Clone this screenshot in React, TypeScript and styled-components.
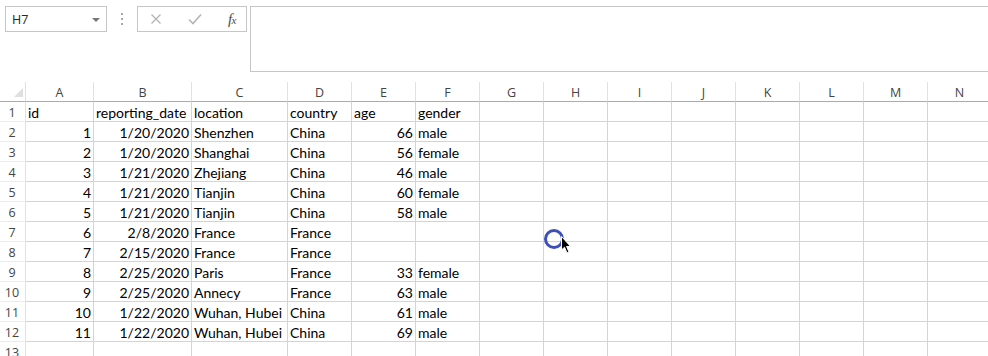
import styled, { createGlobalStyle } from 'styled-components';

const GlobalStyle = createGlobalStyle`
  html, body {
    margin: 0;
    padding: 0;
    background: #ffffff;
    overflow: hidden;
  }
  body {
    font-family: Lato, "Liberation Sans", sans-serif;
  }
`;

const Page = styled.div`
  position: relative;
  width: 988px;
  height: 356px;
  overflow: hidden;
  background: #ffffff;
`;

/* formula bar */

const FormulaBar = styled.div`
  display: flex;
  align-items: flex-start;
  height: 82px;
  padding: 6px 0 0 5px;
  box-sizing: border-box;
`;

const NameBox = styled.div`
  display: flex;
  align-items: center;
  justify-content: space-between;
  width: 102px;
  height: 26px;
  box-sizing: border-box;
  border: 1px solid #c6c6c6;
  padding: 0 6px 0 6px;
  font-family: "Open Sans", "Liberation Sans", sans-serif;
  font-size: 12.5px;
  color: #262626;
`;

const Caret = styled.span`
  width: 0;
  height: 0;
  border-left: 4px solid transparent;
  border-right: 4px solid transparent;
  border-top: 4px solid #777777;
  margin-top: 1px;
`;

const Grip = styled.div`
  display: flex;
  flex-direction: column;
  gap: 3px;
  width: 30px;
  height: 26px;
  align-items: center;
  justify-content: center;
  span {
    width: 2px;
    height: 2px;
    background: #a8a8a8;
  }
`;

const FnBox = styled.div`
  display: flex;
  align-items: center;
  justify-content: space-between;
  width: 110px;
  height: 26px;
  box-sizing: border-box;
  border: 1px solid #c6c6c6;
  padding: 0 10px 0 12px;
`;

const FxLabel = styled.span`
  font-family: "Liberation Serif", serif;
  font-style: italic;
  font-size: 15px;
  color: #4a4a4a;
  letter-spacing: -0.5px;
  sub {
    font-size: 11px;
    vertical-align: baseline;
  }
`;

const FormulaInput = styled.div`
  flex: 1;
  height: 66px;
  margin-left: 3px;
  box-sizing: border-box;
  border: 1px solid #c6c6c6;
  border-right: none;
`;

/* sheet */

const Sheet = styled.div`
  display: grid;
  grid-template-columns: 26px 68px 98px 96px repeat(11, 64px);
  grid-auto-rows: 20px;
  font-size: 14px;
  color: #000000;
`;

const Corner = styled.div`
  position: relative;
  border-right: 1px solid #e1e1e1;
  border-bottom: 1px solid #ababab;
  &::after {
    content: '';
    position: absolute;
    right: 2px;
    bottom: 4px;
    width: 0;
    height: 0;
    border-left: 9px solid transparent;
    border-bottom: 9px solid #dfdfdf;
  }
`;

const ColHead = styled.div`
  display: flex;
  align-items: center;
  justify-content: center;
  border-right: 1px solid #e1e1e1;
  border-bottom: 1px solid #ababab;
  font-family: "Open Sans", "Liberation Sans", sans-serif;
  font-size: 12.5px;
  color: #444444;
  padding-top: 1px;
  box-sizing: border-box;
`;

const RowHead = styled.div`
  display: flex;
  align-items: flex-end;
  justify-content: center;
  border-right: 1px solid #e1e1e1;
  border-bottom: 1px solid #ececec;
  font-family: "Open Sans", "Liberation Sans", sans-serif;
  font-size: 12.5px;
  color: #444444;
  line-height: 17px;
  padding-right: 1px;
  box-sizing: border-box;
`;

const Cell = styled.div<{ $num?: boolean }>`
  display: flex;
  align-items: flex-end;
  justify-content: ${(p) => (p.$num ? 'flex-end' : 'flex-start')};
  padding: 0 ${(p) => (p.$num ? '2px' : '0')} 0 ${(p) => (p.$num ? '0' : '2px')};
  border-right: 1px solid #d4d4d4;
  border-bottom: 1px solid #d4d4d4;
  line-height: 16px;
  white-space: nowrap;
  box-sizing: border-box;
  overflow: visible;
`;

const Cursor = styled.svg`
  position: absolute;
  left: 542px;
  top: 227px;
`;

const COLUMNS = ['A', 'B', 'C', 'D', 'E', 'F', 'G', 'H', 'I', 'J', 'K', 'L', 'M', 'N'];

type Row = [string | number, string, string, string, string | number, string];

const ROWS: Row[] = [
  ['id', 'reporting_date', 'location', 'country', 'age', 'gender'],
  [1, '1/20/2020', 'Shenzhen', 'China', 66, 'male'],
  [2, '1/20/2020', 'Shanghai', 'China', 56, 'female'],
  [3, '1/21/2020', 'Zhejiang', 'China', 46, 'male'],
  [4, '1/21/2020', 'Tianjin', 'China', 60, 'female'],
  [5, '1/21/2020', 'Tianjin', 'China', 58, 'male'],
  [6, '2/8/2020', 'France', 'France', '', ''],
  [7, '2/15/2020', 'France', 'France', '', ''],
  [8, '2/25/2020', 'Paris', 'France', 33, 'female'],
  [9, '2/25/2020', 'Annecy', 'France', 63, 'male'],
  [10, '1/22/2020', 'Wuhan, Hubei', 'China', 61, 'male'],
  [11, '1/22/2020', 'Wuhan, Hubei', 'China', 69, 'male'],
  ['', '', '', '', '', ''],
];

const isNum = (v: string | number, col: number, row: number) =>
  row > 0 && (typeof v === 'number' || col === 1);

export default function App() {
  return (
    <>
      <GlobalStyle />
      <Page>
        <FormulaBar>
          <NameBox>
            <span>H7</span>
            <Caret />
          </NameBox>
          <Grip>
            <span />
            <span />
            <span />
          </Grip>
          <FnBox>
            <svg width="12" height="12" viewBox="0 0 12 12" aria-hidden>
              <path d="M1.5 1.5 L10.5 10.5 M10.5 1.5 L1.5 10.5" stroke="#b4b4b4" strokeWidth="1.3" fill="none" />
            </svg>
            <svg width="14" height="12" viewBox="0 0 14 12" aria-hidden>
              <path d="M1 6.5 L5 10.5 L13 1.5" stroke="#b4b4b4" strokeWidth="1.6" fill="none" />
            </svg>
            <FxLabel>
              f<sub>x</sub>
            </FxLabel>
          </FnBox>
          <FormulaInput />
        </FormulaBar>

        <Sheet>
          <Corner />
          {COLUMNS.map((c) => (
            <ColHead key={c}>{c}</ColHead>
          ))}
          {ROWS.map((row, r) => (
            <>
              <RowHead key={`h${r}`}>{r + 1}</RowHead>
              {COLUMNS.map((c, ci) => {
                const v = ci < row.length ? row[ci] : '';
                return (
                  <Cell key={`${r}-${c}`} $num={isNum(v, ci, r)}>
                    {v}
                  </Cell>
                );
              })}
            </>
          ))}
        </Sheet>

        <Cursor width="32" height="32" viewBox="0 0 32 32" aria-hidden>
          <circle cx="12" cy="12" r="8.5" stroke="#3f4fb8" strokeWidth="3" fill="none" />
          <path
            d="M19.5 9.5 L19.5 23 L22.5 20.2 L25 26 L27 25.1 L24.6 19.5 L28.6 19.5 Z"
            fill="#000000"
            stroke="#ffffff"
            strokeWidth="1"
            strokeLinejoin="round"
          />
        </Cursor>
      </Page>
    </>
  );
}
